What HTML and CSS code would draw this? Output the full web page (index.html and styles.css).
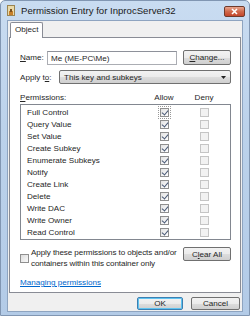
FILE: index.html
```html
<!DOCTYPE html>
<html>
<head>
<meta charset="utf-8">
<link rel="stylesheet" href="styles.css">
</head>
<body>
<div class="window">
  <div class="titlebar">
    <svg class="appicon" width="8" height="11" viewBox="0 0 8 11">
      <rect x="0.5" y="0.5" width="7" height="10" fill="#e9d9a8" stroke="#9a8452"/>
      <rect x="2" y="6" width="4" height="4" fill="#c8802a"/>
      <rect x="3" y="4" width="2" height="3" fill="#7a5020"/>
    </svg>
    <span class="title">Permission Entry for InprocServer32</span>
    <div class="close">
      <svg width="9" height="7" viewBox="0 0 9 7"><path d="M2 1 L7 6 M7 1 L2 6" stroke="#fff" stroke-width="1.6"/></svg>
    </div>
  </div>
  <div class="client">
    <div class="tabs"><div class="tab">Object</div></div>
    <div class="panel">
      <div class="row name-row">
        <span class="lbl lbl-name"><u>N</u>ame:</span>
        <div class="textbox">Me (ME-PC\Me)</div>
        <div class="btn btn-change"><u>C</u>hange...</div>
      </div>
      <div class="row apply-row">
        <span class="lbl lbl-apply">Apply t<u>o</u>:</span>
        <div class="select">
          <span>This key and subkeys</span>
          <svg width="5" height="3" viewBox="0 0 5 3"><path d="M0 0 H5 L2.5 3 Z" fill="#222"/></svg>
        </div>
      </div>
      <div class="perm-head">
        <span class="perm-lbl"><u>P</u>ermissions:</span>
        <span class="col">Allow</span>
        <span class="col">Deny</span>
      </div>
      <div class="list">
        <div class="item"><span class="iname">Full Control</span><span class="cb on focus"></span><span class="cb off"></span></div>
        <div class="item"><span class="iname">Query Value</span><span class="cb on"></span><span class="cb off"></span></div>
        <div class="item"><span class="iname">Set Value</span><span class="cb on"></span><span class="cb off"></span></div>
        <div class="item"><span class="iname">Create Subkey</span><span class="cb on"></span><span class="cb off"></span></div>
        <div class="item"><span class="iname">Enumerate Subkeys</span><span class="cb on"></span><span class="cb off"></span></div>
        <div class="item"><span class="iname">Notify</span><span class="cb on"></span><span class="cb off"></span></div>
        <div class="item"><span class="iname">Create Link</span><span class="cb on"></span><span class="cb off"></span></div>
        <div class="item"><span class="iname">Delete</span><span class="cb on"></span><span class="cb off"></span></div>
        <div class="item"><span class="iname">Write DAC</span><span class="cb on"></span><span class="cb off"></span></div>
        <div class="item"><span class="iname">Write Owner</span><span class="cb on"></span><span class="cb off"></span></div>
        <div class="item"><span class="iname">Read Control</span><span class="cb on"></span><span class="cb off"></span></div>
      </div>
      <div class="inherit-row">
        <span class="cb big"></span>
        <span class="inherit-text">Apply these permissions to objects and/or<br>containers within this container only</span>
        <div class="btn btn-clear">C<u>l</u>ear All</div>
      </div>
      <a class="link" href="#">Managing permissions</a>
    </div>
    <div class="buttons">
      <div class="btn btn-ok">OK</div>
      <div class="btn btn-cancel">Cancel</div>
    </div>
  </div>
</div>
</body>
</html>
```
FILE: styles.css
```css
* { box-sizing: border-box; }
html, body { margin: 0; padding: 0; }
body {
  width: 250px;
  height: 316px;
  font-family: "Liberation Sans", Arial, sans-serif;
  font-size: 8.1px;
  color: #262626;
  overflow: hidden;
}
u { text-decoration: underline; text-underline-offset: 1px; }

.window {
  width: 250px;
  height: 316px;
  background: linear-gradient(180deg, #c9dcf1 0%, #bcd2eb 40%, #b3cbe7 100%);
  border: 1px solid #8196b2;
  border-radius: 5px 5px 0 0;
  display: flex;
  flex-direction: column;
  padding: 0 6px 3px 6px;
}

.titlebar {
  height: 19px;
  display: flex;
  align-items: center;
  position: relative;
}
.appicon { margin-left: 0; margin-right: 6px; flex-shrink: 0; }
.title { font-size: 9.6px; color: #1a1a1a; white-space: nowrap; }
.close {
  position: absolute;
  right: -2px;
  top: 5px;
  width: 21px;
  height: 11px;
  border: 1px solid #6f3b2c;
  border-radius: 2px;
  background: linear-gradient(180deg, #e9a58e 0%, #d0694b 50%, #c4462a 100%);
  display: flex;
  align-items: center;
  justify-content: center;
}

.client {
  flex: 1;
  background: #f0f0f0;
  border: 1px solid #8ea4c0;
  display: flex;
  flex-direction: column;
  padding: 1px 1px 0 1px;
}

.tabs { display: flex; height: 15px; padding-left: 1px; }
.tab {
  background: #fff;
  border: 1px solid #898c95;
  border-bottom: none;
  border-radius: 2px 2px 0 0;
  padding: 2px 4px 0 4px;
  height: 16px;
  position: relative;
  z-index: 1;
}

.panel {
  background: #fff;
  border: 1px solid #898c95;
  height: 256px;
  display: flex;
  flex-direction: column;
  padding: 12px 9px 0 10px;
}

.row { display: flex; align-items: center; }
.name-row { height: 15px; }
.lbl-name { width: 27px; flex-shrink: 0; }
.textbox {
  width: 130px;
  height: 14px;
  border: 1px solid #abadb3;
  border-top-color: #8e919a;
  padding: 1px 3px 0;
  display: flex;
  align-items: center;
  flex-shrink: 0;
}
.btn {
  display: flex;
  align-items: center;
  justify-content: center;
  border: 1px solid #707070;
  border-radius: 2px;
  background: linear-gradient(180deg, #f2f2f2 0%, #ebebeb 50%, #dddddd 51%, #cfcfcf 100%);
  flex-shrink: 0;
}
.btn-change { width: 48px; height: 15px; margin-left: auto; }
.apply-row { margin-top: 5px; height: 14px; }
.lbl-apply { width: 39px; flex-shrink: 0; }
.select {
  flex: 1;
  height: 14px;
  border: 1px solid #707070;
  border-radius: 2px;
  background: linear-gradient(180deg, #f2f2f2 0%, #ebebeb 50%, #dddddd 51%, #cfcfcf 100%);
  display: flex;
  align-items: center;
  justify-content: space-between;
  padding: 0 4px 0 4px;
}

.perm-head {
  display: flex;
  align-items: center;
  height: 12px;
  margin-top: 7px;
}
.perm-lbl { width: 124px; flex-shrink: 0; }
.col { width: 40px; text-align: center; flex-shrink: 0; }

.list {
  border: 1px solid #828790;
  height: 136px;
  margin-top: 1px;
  padding: 1px 0 0 6px;
  display: flex;
  flex-direction: column;
}
.item { display: flex; align-items: center; height: 12px; }
.iname { width: 133px; flex-shrink: 0; }
.cb {
  width: 9px;
  height: 9px;
  border: 1px solid #8f8f8f;
  background: linear-gradient(135deg, #e2e2e2, #ffffff);
  margin-right: 31px;
  position: relative;
  flex-shrink: 0;
}
.cb.on::after {
  content: "";
  position: absolute;
  left: 2px;
  top: 0px;
  width: 3px;
  height: 5px;
  border: solid #4a5a76;
  border-width: 0 1.2px 1.2px 0;
  transform: rotate(40deg);
}
.cb.off { border-color: #c5c5c5; background: #f2f2f2; }
.cb.focus { outline: 1px dotted #999; outline-offset: 1px; }
.cb.big { margin-right: 0; border-color: #8f8f8f; background: linear-gradient(135deg, #dcdcdc, #fafafa); margin-top: 7px; }

.inherit-row {
  display: flex;
  align-items: flex-start;
  margin-top: 7px;
  height: 24px;
}
.inherit-text { margin-left: 2px; line-height: 11px; white-space: nowrap; letter-spacing: -0.1px; }
.btn-clear { width: 48px; height: 14px; margin-left: auto; }

.link {
  color: #0066cc;
  text-decoration: underline;
  margin-top: 7px;
  align-self: flex-start;
}

.buttons {
  display: flex;
  justify-content: flex-end;
  gap: 8px;
  padding: 4px 1px 0 0;
}
.btn-ok { width: 46px; height: 13px; border-color: #3c7fb1; box-shadow: inset 0 0 0 1px #5fc3f0; }
.btn-cancel { width: 49px; height: 13px; }
```
